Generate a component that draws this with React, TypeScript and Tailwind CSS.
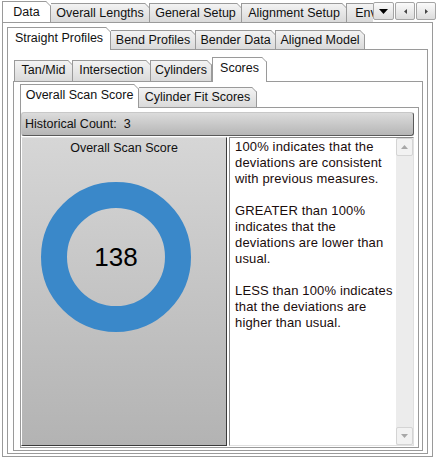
import clsx from 'clsx';

type Tab = { label: string; w: string };

const row1: Tab[] = [
    { label: 'Data', w: 'w-[49px]' },
    { label: 'Overall Lengths', w: 'w-[100px]' },
    { label: 'General Setup', w: 'w-[93px]' },
    { label: 'Alignment Setup', w: 'w-[106px]' },
    { label: 'Env', w: 'w-[40px]' },
];
const row2: Tab[] = [
    { label: 'Straight Profiles', w: 'w-[104px]' },
    { label: 'Bend Profiles', w: 'w-[86px]' },
    { label: 'Bender Data', w: 'w-[81px]' },
    { label: 'Aligned Model', w: 'w-[90px]' },
];
const row3: Tab[] = [
    { label: 'Tan/Mid', w: 'w-[59px]' },
    { label: 'Intersection', w: 'w-[79px]' },
    { label: 'Cylinders', w: 'w-[62px]' },
    { label: 'Scores', w: 'w-[55px]' },
];
const row4: Tab[] = [
    { label: 'Overall Scan Score', w: 'w-[119px]' },
    { label: 'Cylinder Fit Scores', w: 'w-[119px]' },
];

function DogEar() {
    return (
        <svg width="5" height="5" viewBox="0 0 5 5" className="absolute -right-px -top-px">
            <polygon points="0,0 5,0 5,5" fill="#ffffff" />
            <line x1="0" y1="0.5" x2="4.5" y2="5" stroke="#9a9a9a" strokeWidth="1" />
        </svg>
    );
}

function TabStrip({
    tabs,
    active,
    activeH,
    idleH,
}: {
    tabs: Tab[];
    active: number;
    activeH: string;
    idleH: string;
}) {
    return (
        <div className="flex items-end">
            {tabs.map((tab, i) => (
                <div
                    key={tab.label}
                    className={clsx(
                        'relative flex shrink-0 items-start justify-center border border-b-0 border-[#9a9a9a] text-[12.5px] leading-[15px] text-[#111]',
                        tab.w,
                        i === active
                            ? clsx('z-10 -mb-px bg-white pt-[3px]', activeH)
                            : clsx('bg-gradient-to-b from-[#f3f3f3] to-[#dadada] pt-[2px]', idleH),
                        i > 0 && i !== active && '-ml-px',
                    )}
                >
                    <span className="whitespace-nowrap">{tab.label}</span>
                    <DogEar />
                </div>
            ))}
        </div>
    );
}

function ScrollButton({ children, w }: { children: React.ReactNode; w: string }) {
    return (
        <div
            className={clsx(
                'flex h-[18px] items-center justify-center rounded-[2px] border border-[#a5a5a5] bg-gradient-to-b from-[#fbfbfb] to-[#dcdcdc]',
                w,
            )}
        >
            {children}
        </div>
    );
}

const lines = [
    '100% indicates that the',
    'deviations are consistent',
    'with previous measures.',
    '',
    'GREATER than 100%',
    'indicates that the',
    'deviations are lower than',
    'usual.',
    '',
    'LESS than 100% indicates',
    'that the deviations are',
    'higher than usual.',
];

export default function App() {
    return (
        <div className="h-[462px] w-[436px] overflow-hidden bg-white font-['Liberation_Sans',Arial,sans-serif]">
            {/* top tab row */}
            <div className="flex h-[22px] items-end pl-[2px]">
                <div className="w-[372px] overflow-hidden">
                    <TabStrip tabs={row1} active={0} activeH="h-[22px]" idleH="h-[19px]" />
                </div>
                <div className="mb-[2px] flex gap-px self-end">
                    <ScrollButton w="w-[21px]">
                        <svg width="9" height="5" viewBox="0 0 9 5">
                            <polygon points="0,0 9,0 4.5,5" fill="#000" />
                        </svg>
                    </ScrollButton>
                    <ScrollButton w="w-[20px]">
                        <svg width="3" height="5" viewBox="0 0 3 5">
                            <polygon points="3,0 3,5 0,2.5" fill="#444" />
                        </svg>
                    </ScrollButton>
                    <ScrollButton w="w-[20px]">
                        <svg width="3" height="5" viewBox="0 0 3 5">
                            <polygon points="0,0 0,5 3,2.5" fill="#444" />
                        </svg>
                    </ScrollButton>
                </div>
            </div>

            {/* level 1 panel */}
            <div className="ml-[2px] w-[431px] border border-[#9a9a9a] pb-[2px] pl-[4px] pr-[4px] pt-[4px]">
                <TabStrip tabs={row2} active={0} activeH="h-[23px]" idleH="h-[19px]" />

                {/* level 2 panel */}
                <div className="border border-[#9a9a9a] pb-[2px] pl-[5px] pr-[4px] pt-[7px]">
                    <div className="ml-px">
                        <TabStrip tabs={row3} active={3} activeH="h-[25px]" idleH="h-[21px]" />
                    </div>

                    {/* level 3 panel */}
                    <div className="border border-[#9a9a9a] pb-[2px] pl-[6px] pr-[3px] pt-[2px]">
                        <TabStrip tabs={row4} active={0} activeH="h-[24px]" idleH="h-[20px]" />

                        {/* level 4 panel */}
                        <div className="border border-[#9a9a9a] pb-px pr-[4px] pt-[4px]">
                            <div className="flex h-[24px] items-center rounded-[3px] border border-[#c8c8c8] border-b-[#5a5a5a] border-r-[#5a5a5a] bg-gradient-to-b from-[#dcdcdc] to-[#b6b6b6] pl-[3px] text-[12.5px] text-[#111]">
                                Historical Count:&nbsp; 3
                            </div>

                            <div className="mt-px flex h-[309px] gap-[2px]">
                                <div className="flex w-[206px] flex-col border border-l-white border-t-[#e4e4e4] border-b-[#3a3a3a] border-r-[#3a3a3a] bg-gradient-to-b from-[#d6d6d6] to-[#b3b3b3]">
                                    <div className="pt-[3px] text-center text-[12.5px] leading-[15px] text-[#111]">
                                        Overall Scan Score
                                    </div>
                                    <div className="relative ml-[19px] mt-[26px] flex h-[150px] w-[150px] items-center justify-center">
                                        <svg width="150" height="150" viewBox="0 0 150 150" className="absolute inset-0">
                                            <circle cx="75" cy="75" r="62" fill="none" stroke="#3a88c9" strokeWidth="26" />
                                        </svg>
                                        <span className="relative text-[26px] leading-none text-[#000]">138</span>
                                    </div>
                                </div>

                                <div className="flex w-[185px] border border-[#8a8a8a] border-r-[#e0e0e0] border-b-[#e0e0e0] bg-white">
                                    <div className="min-w-0 flex-1 pl-[5px] pt-px text-[13px] leading-[16px] tracking-[0.15px] text-[#1a0c0c]">
                                        {lines.map((l, i) => (
                                            <div key={i} className="h-[16px] whitespace-nowrap">
                                                {l}
                                            </div>
                                        ))}
                                    </div>
                                    <div className="flex w-[17px] shrink-0 flex-col justify-between bg-[#ececec]">
                                        <div className="flex h-[18px] items-center justify-center rounded-[2px] border border-[#d4d4d4] bg-[#f2f2f2]">
                                            <svg width="7" height="4" viewBox="0 0 7 4">
                                                <polygon points="0,4 7,4 3.5,0" fill="#a8a8a8" />
                                            </svg>
                                        </div>
                                        <div className="flex h-[18px] items-center justify-center rounded-[2px] border border-[#d4d4d4] bg-[#f2f2f2]">
                                            <svg width="7" height="4" viewBox="0 0 7 4">
                                                <polygon points="0,0 7,0 3.5,4" fill="#a8a8a8" />
                                            </svg>
                                        </div>
                                    </div>
                                </div>
                            </div>
                        </div>
                    </div>
                </div>
            </div>
        </div>
    );
}
